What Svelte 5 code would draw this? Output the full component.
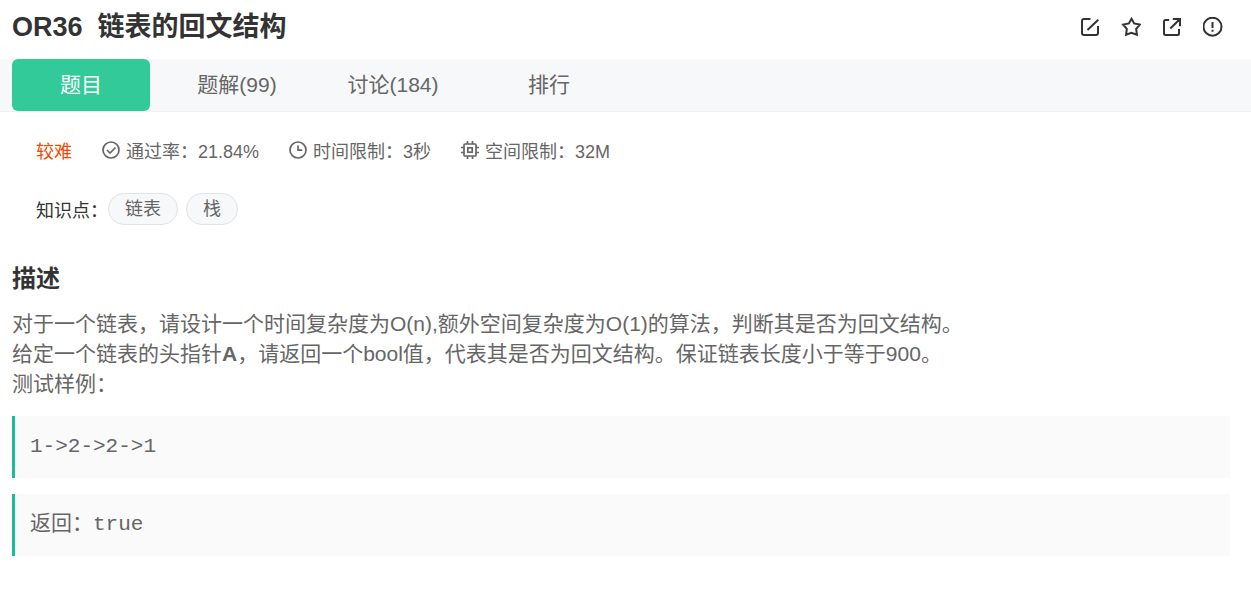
<script lang="ts">
	interface Tab {
		id: string;
		label: string;
		count?: number;
	}

	const tabs: Tab[] = [
		{ id: 'question', label: '题目' },
		{ id: 'solution', label: '题解', count: 99 },
		{ id: 'discuss', label: '讨论', count: 184 },
		{ id: 'rank', label: '排行' }
	];

	const tags = ['链表', '栈'];
	const samples = ['1->2->2->1', '返回：true'];

	let activeTab = $state('question');
</script>

<div class="problem">
	<header class="header">
		<h1 class="title"><span>OR36</span><span>链表的回文结构</span></h1>
		<div class="actions">
			<button class="action" aria-label="笔记">
				<svg viewBox="0 0 20 20">
					<path d="M10.5 2H4Q2 2 2 4v12q0 2 2 2h12q2 0 2-2V9" />
					<path d="M7.5 13L18.3 2.8" />
				</svg>
			</button>
			<button class="action" aria-label="收藏">
				<svg viewBox="0 0 20 20">
					<path
						d="M10.5 1.8l2.6 4.6 5.8 1.2-3.7 4.3.7 5.9-5.4-2.1-5.4 2.1.7-5.9-3.7-4.3 5.8-1.2z"
					/>
				</svg>
			</button>
			<button class="action" aria-label="分享">
				<svg viewBox="0 0 20 20">
					<path d="M7.2 3H3.5Q2 3 2 4.5v12Q2 18 3.5 18h12q1.5 0 1.5-1.5V12" />
					<path d="M8.3 11.5L16.5 3.5" />
					<path class="solid" d="M10.8 1H19v8.2h-2V5L14.8 3h-4z" />
				</svg>
			</button>
			<button class="action" aria-label="反馈">
				<svg viewBox="0 0 20 20">
					<circle cx="9.5" cy="9.7" r="9" />
					<path d="M9.5 5v6M9.5 12.7v2" />
				</svg>
			</button>
		</div>
	</header>

	<nav class="tabs">
		{#each tabs as tab (tab.id)}
			<button
				class="tab"
				class:tab--active={activeTab === tab.id}
				onclick={() => (activeTab = tab.id)}
			>
				{tab.label}{#if tab.count}({tab.count}){/if}
			</button>
		{/each}
	</nav>

	<section class="info">
		<div class="meta">
			<span class="difficulty">较难</span>
			<span class="meta-item">
				<svg viewBox="0 0 18 18">
					<circle cx="9" cy="9" r="8" />
					<path d="M5 9l3 3 5.5-5.5" />
				</svg>
				通过率：21.84%
			</span>
			<span class="meta-item">
				<svg viewBox="0 0 18 18">
					<circle cx="9" cy="9" r="8" />
					<path d="M9 4.5V9.2h4.2" />
				</svg>
				时间限制：3秒
			</span>
			<span class="meta-item">
				<svg viewBox="0 0 18 18">
					<rect x="3" y="3" width="12" height="12" rx="1" />
					<rect x="6.8" y="6.8" width="4.4" height="4.4" />
					<path d="M6.5 0v3M11.5 0v3M6.5 15v3M11.5 15v3M0 6.5h3M0 11.5h3M15 6.5h3M15 11.5h3" />
				</svg>
				空间限制：32M
			</span>
		</div>
		<div class="knowledge">
			<span class="knowledge-label">知识点：</span>
			<div class="tags">
				{#each tags as tag}
					<a class="tag" href="#{tag}">{tag}</a>
				{/each}
			</div>
		</div>
	</section>

	<section class="description">
		<h2>描述</h2>
		<p>对于一个链表，请设计一个时间复杂度为O(n),额外空间复杂度为O(1)的算法，判断其是否为回文结构。</p>
		<p>给定一个链表的头指针<b>A</b>，请返回一个bool值，代表其是否为回文结构。保证链表长度小于等于900。</p>
		<p>测试样例：</p>
		{#each samples as sample}
			<pre class="sample">{sample}</pre>
		{/each}
	</section>
</div>

<style>
	:global(body) {
		margin: 0;
		background: #fff;
	}

	.problem {
		font-family: 'Liberation Sans', 'Noto Sans CJK SC', sans-serif;
		color: #333;
	}

	button {
		padding: 0;
		border: none;
		background: none;
		font: inherit;
		color: inherit;
		cursor: pointer;
	}

	svg {
		display: block;
		fill: none;
		stroke: currentColor;
		stroke-width: 2;
	}

	.solid {
		fill: currentColor;
		stroke: none;
	}

	.header {
		display: flex;
		align-items: center;
		justify-content: space-between;
		height: 53px;
		padding: 0 28px 6px 12px;
	}

	.title {
		display: flex;
		gap: 15px;
		margin: 0;
		font-size: 27px;
		line-height: 36px;
		font-weight: 700;
	}

	.actions {
		display: flex;
		gap: 21px;
	}

	.action svg {
		width: 20px;
		height: 20px;
	}

	.tabs {
		display: flex;
		gap: 18px;
		padding-left: 12px;
		background: #f7f8fa;
		border-bottom: 1px solid #eef0f3;
	}

	.tab {
		width: 138px;
		height: 52px;
		padding-bottom: 4px;
		border-radius: 6px;
		font-size: 21px;
		color: #666;
	}

	.tab--active {
		background: #32ca99;
		color: #fff;
	}

	.info {
		padding: 27px 36px 0;
		font-size: 18px;
		line-height: 27px;
	}

	.meta {
		display: flex;
		flex-wrap: wrap;
		gap: 30px;
		color: #666;
	}

	.difficulty {
		color: #f04800;
	}

	.meta-item {
		display: flex;
		gap: 6px;
	}

	.meta-item svg {
		width: 18px;
		height: 18px;
		margin-top: 2px;
		stroke-width: 1.7;
	}

	.knowledge {
		display: flex;
		align-items: flex-end;
		margin-top: 27px;
	}

	.tags {
		display: flex;
		gap: 8px;
	}

	.tag {
		padding: 0 16px;
		border: 1px solid #e0e3e8;
		border-radius: 16px;
		background: #f7f8fa;
		color: #666;
		line-height: 30px;
		text-decoration: none;
	}

	.description {
		padding: 36px 21px 0 12px;
		font-size: 21px;
		line-height: 30px;
		color: #666;
	}

	h2 {
		margin: 0 0 12px;
		font-size: 24px;
		line-height: 36px;
		color: #333;
	}

	p {
		margin: 0;
	}

	.sample {
		margin: 16px 0 0;
		padding: 16px 15px;
		border-left: 3px solid #1abc9c;
		background: #fafafa;
		font-family: 'Liberation Mono', 'Noto Sans CJK SC', monospace;
		font-size: 21px;
		line-height: 30px;
		white-space: pre-wrap;
	}

	p + .sample {
		margin-top: 17px;
	}
</style>
